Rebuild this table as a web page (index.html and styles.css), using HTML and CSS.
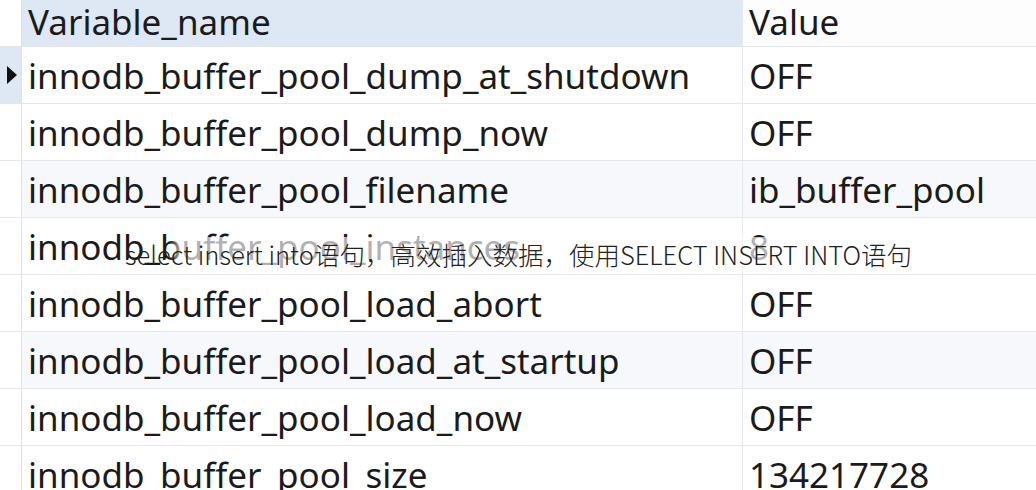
FILE: index.html
```html
<!DOCTYPE html>
<html>
<head>
<meta charset="utf-8">
<link rel="stylesheet" href="styles.css">
</head>
<body>
<div class="grid">
  <div class="row head">
    <div class="gut"></div>
    <div class="cell name">Variable_name</div>
    <div class="cell val">Value</div>
  </div>
  <div class="row sel">
    <div class="gut"><span class="tri"></span></div>
    <div class="cell name">innodb_buffer_pool_dump_at_shutdown</div>
    <div class="cell val">OFF</div>
  </div>
  <div class="row">
    <div class="gut"></div>
    <div class="cell name">innodb_buffer_pool_dump_now</div>
    <div class="cell val">OFF</div>
  </div>
  <div class="row tint">
    <div class="gut"></div>
    <div class="cell name">innodb_buffer_pool_filename</div>
    <div class="cell val">ib_buffer_pool</div>
  </div>
  <div class="row">
    <div class="gut"></div>
    <div class="cell name">innodb_buffer_pool_instances</div>
    <div class="cell val">8</div>
  </div>
  <div class="row">
    <div class="gut"></div>
    <div class="cell name">innodb_buffer_pool_load_abort</div>
    <div class="cell val">OFF</div>
  </div>
  <div class="row tint">
    <div class="gut"></div>
    <div class="cell name">innodb_buffer_pool_load_at_startup</div>
    <div class="cell val">OFF</div>
  </div>
  <div class="row">
    <div class="gut"></div>
    <div class="cell name">innodb_buffer_pool_load_now</div>
    <div class="cell val">OFF</div>
  </div>
  <div class="row">
    <div class="gut"></div>
    <div class="cell name">innodb_buffer_pool_size</div>
    <div class="cell val">134217728</div>
  </div>
</div>
<div class="caption">select insert into语句，高效插入数据，使用SELECT INSERT INTO语句</div>
</body>
</html>
```
FILE: styles.css
```css
html, body {
  margin: 0;
  padding: 0;
  background: #ffffff;
  overflow: hidden;
  width: 1036px;
  height: 490px;
}
body {
  position: relative;
  font-family: "Noto Sans", "Open Sans", sans-serif;
}
.grid {
  display: flex;
  flex-direction: column;
}
.row {
  display: grid;
  grid-template-columns: 22px 721px 1fr;
  height: 57px;
  border-bottom: 1px solid #e4e7eb;
  box-sizing: border-box;
}
.row.head {
  height: 47px;
  border-bottom: 1px solid #e2e6ea;
}
.gut {
  border-right: 1px solid #dde2e8;
  display: flex;
  align-items: center;
  justify-content: center;
}
.row.sel .gut {
  background: #dde8f4;
}
.tri {
  width: 0;
  height: 0;
  border-top: 9px solid transparent;
  border-bottom: 9px solid transparent;
  border-left: 10px solid #111;
  margin-left: 3px;
}
.cell {
  font-size: 35px;
  color: #1b1b1b;
  padding-left: 6px;
  line-height: 57px;
  white-space: nowrap;
  overflow: hidden;
}
.row.head .cell {
  line-height: 44px;
}
.cell.name {
  border-right: 1px solid #e6e9ee;
}
.row.head .cell.name {
  background: #dde8f4;
}
.row.head .cell.val {
  background: #fdfdfe;
}
.row.tint .cell {
  background: #f6f8fb;
}
.caption {
  position: absolute;
  left: 125px;
  top: 237px;
  font-family: "Noto Sans CJK SC", sans-serif;
  font-weight: 300;
  font-size: 25.5px;
  line-height: 34px;
  color: #222;
  padding: 0 4px 0 0;
  background: linear-gradient(to right, rgba(255,255,255,0) 0, rgba(255,255,255,0) 45px, rgba(255,255,255,0.66) 55px);
}
```
